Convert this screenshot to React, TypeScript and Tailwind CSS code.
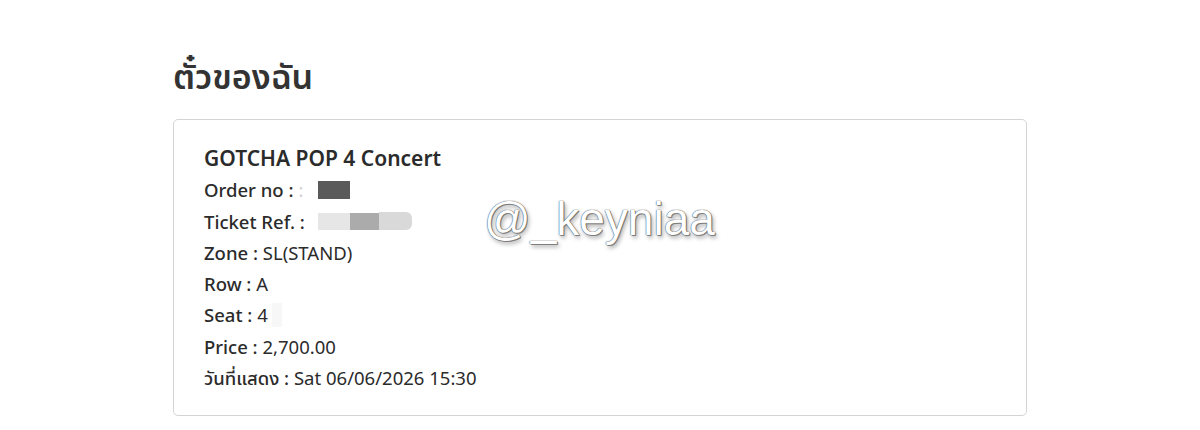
import React from "react";

export default function App() {
  return (
    <div
      className="w-[1200px] h-[430px] bg-white overflow-hidden relative"
      style={{ fontFamily: '"Noto Sans", "Open Sans", "Noto Sans Thai", sans-serif' }}
    >
      <div className="pl-[173px] pt-[52px]">
        <h1 className="text-[34px] font-semibold text-[#333333] leading-[48px]">ตั๋วของฉัน</h1>
        <div className="mt-[19px] w-[854px] h-[297px] border border-[#d4d4d4] rounded-[5px] pl-[30px]">
          <div className="pt-[23px] text-[#2b2b2b] text-[18.5px] leading-[31.3px]">
            <div className="text-[21px] font-semibold">GOTCHA POP 4 Concert</div>
            <div className="flex items-center">
              <span className="font-medium">Order no :</span>
              <span className="ml-[5px] text-[#cfcfcf]">:</span>
              <span className="ml-[15px] inline-block w-[32px] h-[18px] bg-[#5a5a5a]" />
            </div>
            <div className="flex items-center">
              <span className="font-medium">Ticket Ref. :</span>
              <span className="ml-[13px] inline-block w-[32px] h-[17px] bg-[#e6e6e6]" />
              <span className="inline-block w-[29px] h-[17px] bg-[#ababab]" />
              <span className="inline-block w-[33px] h-[18px] bg-[#d9d9d9] rounded-r-[6px]" />
            </div>
            <div>
              <span className="font-medium">Zone :</span> SL(STAND)
            </div>
            <div>
              <span className="font-medium">Row :</span> A
            </div>
            <div className="flex items-center">
              <span className="font-medium">Seat :</span>
              <span className="ml-[5px]">4</span>
              <span className="ml-[4px] inline-block w-[10px] h-[24px] bg-[#f7f7f7]" />
            </div>
            <div>
              <span className="font-medium">Price :</span> 2,700.00
            </div>
            <div>
              <span className="font-medium">วันที่แสดง :</span> Sat 06/06/2026 15:30
            </div>
          </div>
        </div>
      </div>
      <div
        className="absolute left-[484px] top-[192px] text-[46px] leading-[54px] text-white"
        style={{
          fontFamily: '"Liberation Sans", Arial, sans-serif',
          textShadow:
            "0 0 1px #555, 0 0 1px #555, 1px 1px 0 #888, 2px 3px 4px rgba(0,0,0,0.35)",
        }}
      >
        @_keyniaa
      </div>
    </div>
  );
}
